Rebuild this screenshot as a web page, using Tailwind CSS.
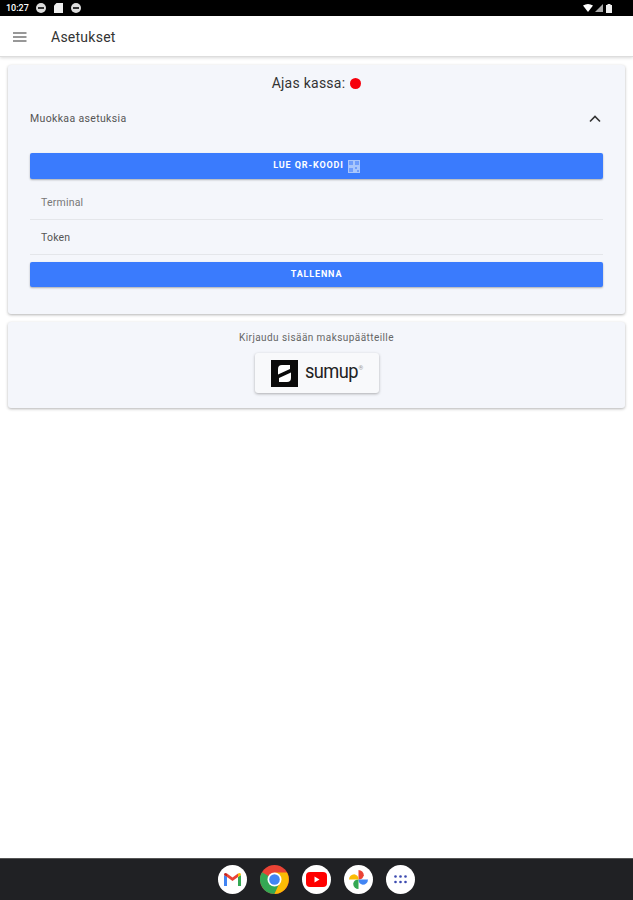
<!DOCTYPE html>
<html lang="fi">
<head>
    <meta charset="UTF-8">
    <meta name="viewport" content="width=device-width, initial-scale=1.0">
    <title>Asetukset</title>
    <script src="https://cdn.jsdelivr.net/npm/@tailwindcss/browser@4"></script>
</head>
<body class="bg-white font-['Roboto',sans-serif] text-[#222]">
<div class="w-[633px] h-[900px] flex flex-col overflow-hidden">

    <!-- status bar -->
    <div class="h-4 bg-black flex items-center justify-between pl-[6px] pr-[7px] text-white shrink-0">
        <div class="flex items-center">
            <span class="text-[9px] font-medium leading-none w-[30px]">10:27</span>
            <span class="w-[10px] h-[10px] rounded-full bg-[#ddd] flex items-center justify-center"><span class="w-[6px] h-[2px] bg-[#333]"></span></span>
            <svg width="9" height="10" viewBox="0 0 9 10" class="ml-[8px]"><path d="M2.500 0H9v10H0V2.500z" fill="#eee"/></svg>
            <span class="ml-[8px] w-[10px] h-[10px] rounded-full bg-[#ddd] flex items-center justify-center"><span class="w-[6px] h-[2px] bg-[#333]"></span></span>
        </div>
        <div class="flex items-center gap-[2px] mr-[14px]">
            <svg width="10" height="8" viewBox="0 0 10 8"><path d="M0 1.500Q5-1.500 10 1.500L5 8z" fill="#fff"/></svg>
            <svg width="8" height="8" viewBox="0 0 8 8"><path d="M8 0v8H0z" fill="#aaa"/></svg>
            <svg width="6" height="9" viewBox="0 0 6 9" class="ml-[1px]"><path d="M1.500 0h3v1H6v8H0V1h1.500z" fill="#eee"/></svg>
        </div>
    </div>

    <!-- app bar -->
    <header class="h-[41px] pt-[2px] bg-white flex items-center shrink-0 border-b border-[#ddd] shadow-[0_1px_3px_rgba(0,0,0,0.15)] z-10">
        <svg width="14" height="10" viewBox="0 0 14 10" class="ml-[13px]"><path d="M0 1h13.500M0 5h13.500M0 9h13.500" stroke="#777" stroke-width="1.500"/></svg>
        <h1 class="ml-[24px] text-[14px] leading-none tracking-[0.25px] text-[#333]">Asetukset</h1>
    </header>

    <main class="flex-1 bg-white px-2 pt-2 flex flex-col gap-2">
        <!-- settings card -->
        <section class="h-[249px] bg-[#f4f6fb] rounded-[3px] shadow-[0_1px_3px_rgba(0,0,0,0.3)] px-[22px] flex flex-col">
            <div class="flex items-center justify-center gap-[5px] h-[36px] pt-[1px] text-[14px] text-[#333] tracking-[0.25px]">
                <span>Ajas kassa:</span>
                <span class="w-[11px] h-[11px] rounded-full bg-[#f6000c]"></span>
            </div>
            <div class="flex items-center justify-between h-[35px] text-[10.500px] text-[#555] tracking-[0.35px]">
                <span>Muokkaa asetuksia</span>
                <svg width="12" height="8" viewBox="0 0 12 8" class="mr-[2px]"><path d="M1 6.500l5-5 5 5" fill="none" stroke="#333" stroke-width="1.600"/></svg>
            </div>
            <button class="mt-[17px] h-[26px] bg-[#3a7bfd] rounded-[2px] shadow-[0_1px_2px_rgba(0,0,0,0.3)] text-white text-[9px] font-bold tracking-[0.9px] flex items-center justify-center gap-[4px]">
                LUE QR-KOODI
                <svg width="12" height="13" viewBox="0 0 12 13"><rect width="12" height="13" fill="#a9c6fb"/><path d="M1 1h4v4H1zM7 1h4v4H7zM1 8h4v4H1zM7 7h2v2H7zM9 10h2v2H9z" fill="#6f9dfb"/></svg>
            </button>
            <div class="h-[35px] pt-[2px] border-b border-[#e4e6ea] flex items-center pl-[11px] text-[10.500px] text-[#777] tracking-[0.2px] mt-[6px]">Terminal</div>
            <div class="h-[35px] pt-[2px] border-b border-[#e4e6ea] flex items-center pl-[11px] text-[10.500px] text-[#555] tracking-[0.2px]">Token</div>
            <button class="mt-[7px] h-[25px] bg-[#3a7bfd] rounded-[2px] shadow-[0_1px_2px_rgba(0,0,0,0.3)] text-white text-[9px] font-bold tracking-[0.85px]">TALLENNA</button>
        </section>

        <!-- sumup card -->
        <section class="h-[86px] bg-[#f4f6fb] rounded-[3px] shadow-[0_1px_3px_rgba(0,0,0,0.3)] flex flex-col items-center">
            <p class="mt-[9px] text-[10px] leading-[14px] text-[#666] tracking-[0.43px]">Kirjaudu sisään maksupäätteille</p>
            <div class="mt-[8px] w-[124px] h-[40px] bg-[#f8f9fb] rounded-[3px] shadow-[0_1px_3px_rgba(0,0,0,0.3)] flex items-center pl-[16px]">
                <svg width="27" height="27" viewBox="0 0 27 27"><rect width="27" height="27" fill="#0a0a0a"/><path d="M19 5H11Q7 5 7 9V14.500L19 9zM8 22H16Q20 22 20 18V12.500L8 18z" fill="#fff"/></svg>
                <span class="ml-[7px] w-[53px] text-[21px] leading-none text-[#222] tracking-[-0.7px] -mt-[3px] scale-x-[0.87] origin-left">sumup</span>
                <span class="ml-[1px] -mt-[10px] text-[6px] leading-none text-[#999]">®</span>
            </div>
        </section>
    </main>

    <!-- dock -->
    <nav class="h-[42px] bg-[#202124] border-t border-[#555] flex items-center justify-center gap-[13px] shrink-0">
        <span class="w-[29px] h-[29px] rounded-full bg-white flex items-center justify-center">
            <svg width="19" height="15" viewBox="0 0 19 15"><path d="M1 14V3l3 2v9z" fill="#4285f4"/><path d="M15 14V5l3-2v11z" fill="#34a853"/><path d="M4 5l5.500 4L15 5V1.500L9.500 5.500 4 1.500z" fill="#ea4335"/><path d="M1 3Q1 0 4 1.500V5z" fill="#c5221f"/><path d="M18 3Q18 0 15 1.500V5z" fill="#fbbc04"/></svg>
        </span>
        <span class="w-[29px] h-[29px] rounded-full flex items-center justify-center">
            <svg width="29" height="29" viewBox="0 0 29 29"><circle cx="14.500" cy="14.500" r="14.500" fill="#ea4335"/><path d="M14.500 14.500L2 7.200A14.500 14.500 0 0 0 14.500 29L21.500 14.500z" fill="#34a853"/><path d="M14.500 7.500H27A14.500 14.500 0 0 1 14.500 29L21 14.500z" fill="#fbbc04"/><circle cx="14.500" cy="14.500" r="7" fill="#fff"/><circle cx="14.500" cy="14.500" r="5.300" fill="#4285f4"/></svg>
        </span>
        <span class="w-[29px] h-[29px] rounded-full bg-white flex items-center justify-center">
            <svg width="21" height="15" viewBox="0 0 21 15"><rect width="21" height="15" rx="4" fill="#f00"/><path d="M8.500 4.500v6l5-3z" fill="#fff"/></svg>
        </span>
        <span class="w-[29px] h-[29px] rounded-full bg-white flex items-center justify-center">
            <svg width="21" height="21" viewBox="0 0 21 21"><path d="M10.500 10.500V1a5.300 5.300 0 0 1 5.300 5.300 5.300 5.300 0 0 1-5.300 4.200z" fill="#ea4335"/><path d="M10.500 10.500H20a5.300 5.300 0 0 1-5.300 5.300 5.300 5.300 0 0 1-4.200-5.300z" fill="#4285f4"/><path d="M10.500 10.500V20a5.300 5.300 0 0 1-5.300-5.300 5.300 5.300 0 0 1 5.300-4.200z" fill="#34a853"/><path d="M10.500 10.500H1a5.300 5.300 0 0 1 5.300-5.300 5.300 5.300 0 0 1 4.200 5.300z" fill="#fbbc04"/></svg>
        </span>
        <span class="w-[29px] h-[29px] rounded-full bg-white flex items-center justify-center">
            <svg width="13" height="9" viewBox="0 0 13 9" fill="#3c4bb0"><circle cx="1.500" cy="1.500" r="1.300"/><circle cx="6.500" cy="1.500" r="1.300"/><circle cx="11.500" cy="1.500" r="1.300"/><circle cx="1.500" cy="7" r="1.300"/><circle cx="6.500" cy="7" r="1.300"/><circle cx="11.500" cy="7" r="1.300"/></svg>
        </span>
    </nav>
</div>
</body>
</html>
